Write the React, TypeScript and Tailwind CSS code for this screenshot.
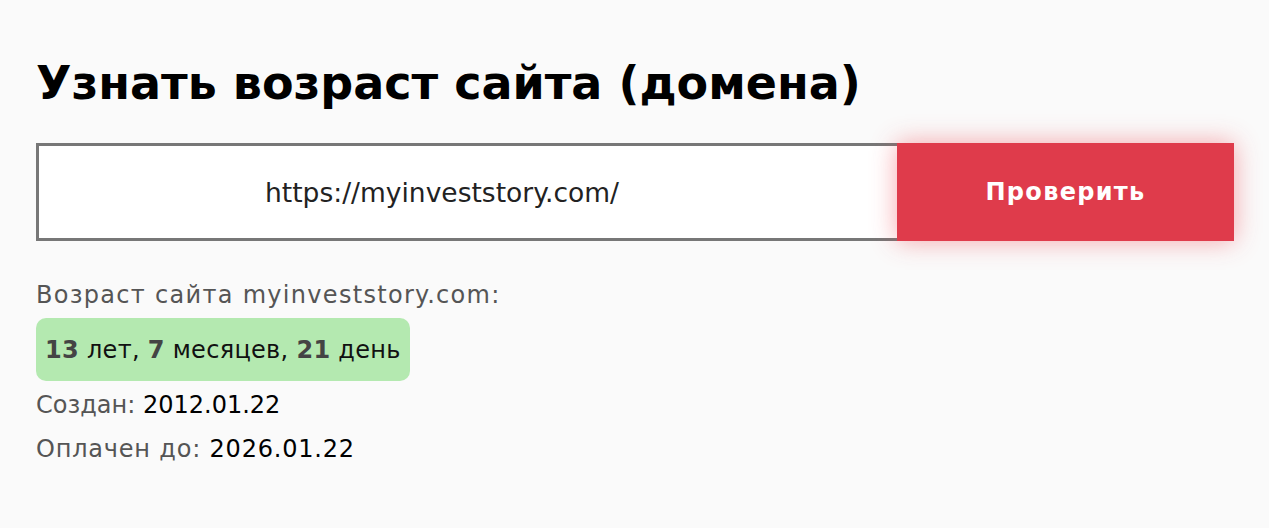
import { useState } from "react";

const FONT = { fontFamily: "'DejaVu Sans', 'Noto Sans', sans-serif" };

export default function App() {
  const [url, setUrl] = useState("https://myinveststory.com/");

  return (
    <div className="min-h-screen bg-[#fafafa] text-black" style={FONT}>
      <div className="px-9 pt-[52px]">
        <h1 className="text-[46px] font-bold leading-[62px]">
          Узнать возраст сайта (домена)
        </h1>

        <form
          className="mt-[29px] flex h-[98px] w-[1198px]"
          onSubmit={(e) => e.preventDefault()}
        >
          <input
            value={url}
            onChange={(e) => setUrl(e.target.value)}
            className="h-full flex-1 border-[3px] border-r-0 border-[#777] bg-white pr-[52px] text-center text-[26.5px] text-[#222] outline-none"
          />
          <button
            type="submit"
            className="h-full w-[337px] bg-[#df3b4b] text-[24px] font-bold tracking-[1.3px] text-white shadow-[0_0_24px_rgba(240,60,70,0.45)]"
          >
            Проверить
          </button>
        </form>

        <div className="mt-[39px] text-[24px] leading-[30px] tracking-[1.3px] text-[#555]">
          Возраст сайта myinveststory.com:
        </div>
        <div className="mt-[8px] inline-flex h-[63px] items-center rounded-[10px] bg-[#b4e9b0] px-[9px] text-[24px] tracking-[0.3px] text-[#111]">
          <b className="font-bold text-[#444]">13</b>
          <span>&nbsp;лет,&nbsp;</span>
          <b className="font-bold text-[#444]">7</b>
          <span>&nbsp;месяцев,&nbsp;</span>
          <b className="font-bold text-[#444]">21</b>
          <span>&nbsp;день</span>
        </div>
        <div className="mt-[6px] text-[24px] leading-[36px] text-[#555]">
          Создан: <span className="text-black">2012.01.22</span>
        </div>
        <div className="mt-[8px] text-[24px] leading-[36px] tracking-[0.8px] text-[#555]">
          Оплачен до: <span className="text-black">2026.01.22</span>
        </div>
      </div>
    </div>
  );
}
